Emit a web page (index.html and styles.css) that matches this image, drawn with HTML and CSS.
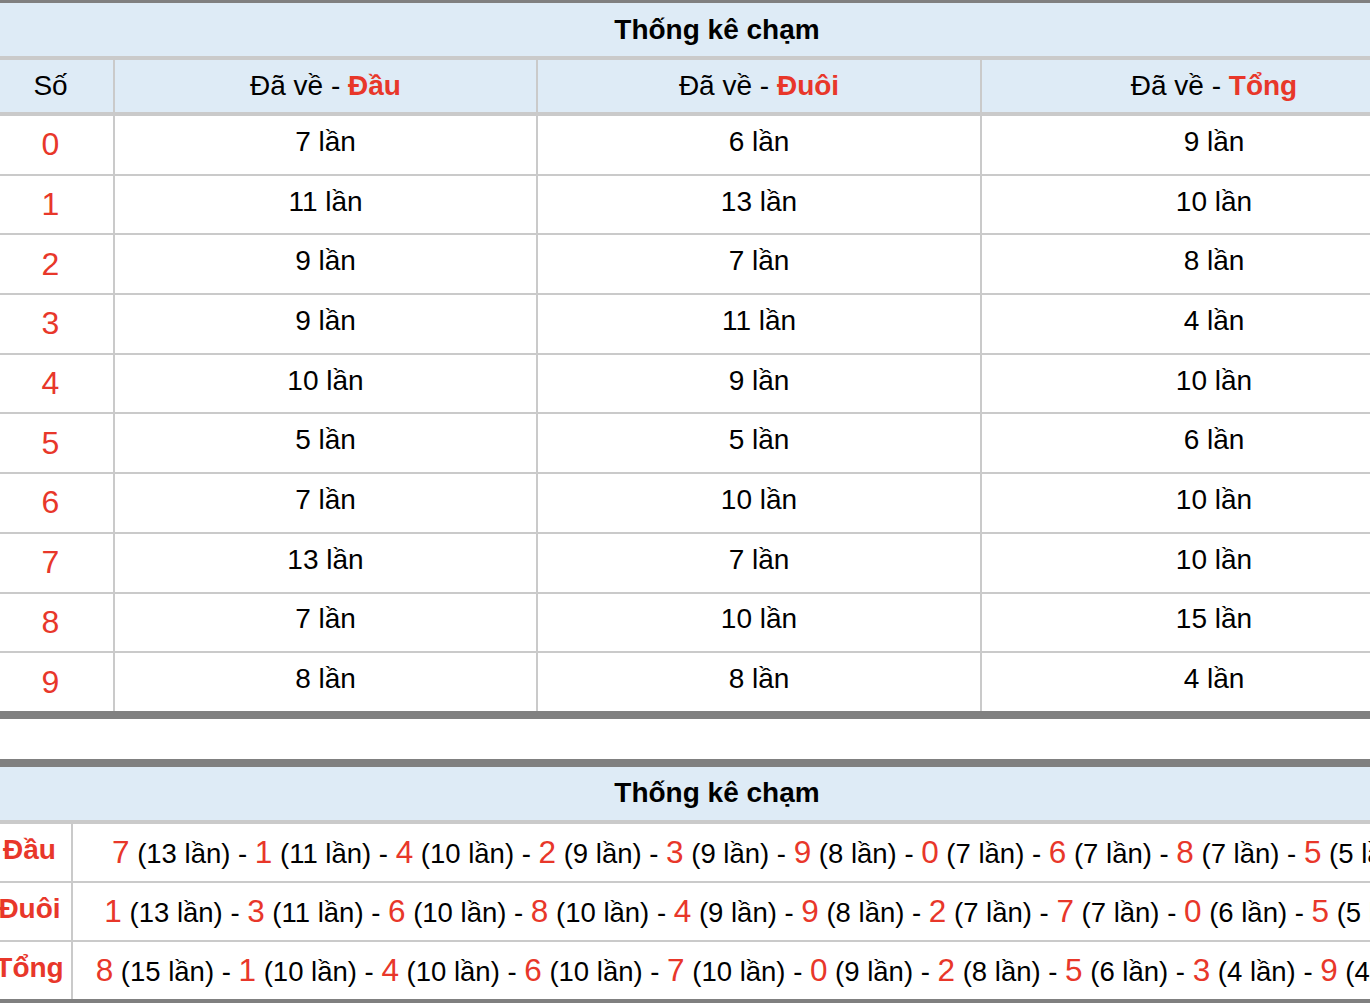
FILE: index.html
```html
<!DOCTYPE html>
<html lang="vi">
<head>
<meta charset="utf-8">
<title>Thống kê chạm</title>
<link rel="stylesheet" href="styles.css">
</head>
<body>
<div class="page">
  <section class="board board-main">
    <div class="title">Thống kê chạm</div>
    <div class="grid grid-main">
      <div class="cell head">Số</div>
      <div class="cell head"><span>Đã về - <b class="hl">Đầu</b></span></div>
      <div class="cell head"><span>Đã về - <b class="hl">Đuôi</b></span></div>
      <div class="cell head"><span>Đã về - <b class="hl">Tổng</b></span></div>

      <div class="cell num">0</div><div class="cell txt">7 lần</div><div class="cell txt">6 lần</div><div class="cell txt">9 lần</div>
      <div class="cell num">1</div><div class="cell txt">11 lần</div><div class="cell txt">13 lần</div><div class="cell txt">10 lần</div>
      <div class="cell num">2</div><div class="cell txt">9 lần</div><div class="cell txt">7 lần</div><div class="cell txt">8 lần</div>
      <div class="cell num">3</div><div class="cell txt">9 lần</div><div class="cell txt">11 lần</div><div class="cell txt">4 lần</div>
      <div class="cell num">4</div><div class="cell txt">10 lần</div><div class="cell txt">9 lần</div><div class="cell txt">10 lần</div>
      <div class="cell num">5</div><div class="cell txt">5 lần</div><div class="cell txt">5 lần</div><div class="cell txt">6 lần</div>
      <div class="cell num">6</div><div class="cell txt">7 lần</div><div class="cell txt">10 lần</div><div class="cell txt">10 lần</div>
      <div class="cell num">7</div><div class="cell txt">13 lần</div><div class="cell txt">7 lần</div><div class="cell txt">10 lần</div>
      <div class="cell num">8</div><div class="cell txt">7 lần</div><div class="cell txt">10 lần</div><div class="cell txt">15 lần</div>
      <div class="cell num last">9</div><div class="cell txt last">8 lần</div><div class="cell txt last">8 lần</div><div class="cell txt last">4 lần</div>
    </div>
  </section>

  <section class="board board-sum">
    <div class="title">Thống kê chạm</div>
    <div class="grid grid-sum">
      <div class="cell label">Đầu</div>
      <div class="cell list"><span class="line"><span class="n">7</span> (13 lần) - <span class="n">1</span> (11 lần) - <span class="n">4</span> (10 lần) - <span class="n">2</span> (9 lần) - <span class="n">3</span> (9 lần) - <span class="n">9</span> (8 lần) - <span class="n">0</span> (7 lần) - <span class="n">6</span> (7 lần) - <span class="n">8</span> (7 lần) - <span class="n">5</span> (5 lần)</span></div>
      <div class="cell label">Đuôi</div>
      <div class="cell list"><span class="line"><span class="n">1</span> (13 lần) - <span class="n">3</span> (11 lần) - <span class="n">6</span> (10 lần) - <span class="n">8</span> (10 lần) - <span class="n">4</span> (9 lần) - <span class="n">9</span> (8 lần) - <span class="n">2</span> (7 lần) - <span class="n">7</span> (7 lần) - <span class="n">0</span> (6 lần) - <span class="n">5</span> (5 lần)</span></div>
      <div class="cell label last">Tổng</div>
      <div class="cell list last"><span class="line"><span class="n">8</span> (15 lần) - <span class="n">1</span> (10 lần) - <span class="n">4</span> (10 lần) - <span class="n">6</span> (10 lần) - <span class="n">7</span> (10 lần) - <span class="n">0</span> (9 lần) - <span class="n">2</span> (8 lần) - <span class="n">5</span> (6 lần) - <span class="n">3</span> (4 lần) - <span class="n">9</span> (4 lần)</span></div>
    </div>
  </section>
</div>
</body>
</html>
```

FILE: styles.css
```css
html, body {
  margin: 0;
  padding: 0;
  overflow: hidden;
  background: #ffffff;
}

body {
  font-family: "Liberation Sans", Arial, Helvetica, sans-serif;
  color: #000000;
  font-size: 28px;
}

.page {
  width: 1458px;
  margin-left: -12px;
  margin-top: -5px;
}

.board {
  border-top: 8px solid #808080;
  border-bottom: 8px solid #808080;
}

.board-sum {
  margin-top: 40px;
}

.title {
  height: 57px;
  box-sizing: border-box;
  background: #deebf6;
  border-bottom: 4px solid #cacaca;
  display: flex;
  align-items: center;
  justify-content: center;
  font-weight: bold;
  font-size: 28px;
}

.grid {
  display: grid;
}

.grid-main {
  grid-template-columns: 127px 423px 444px 464px;
}

.grid-sum {
  grid-template-columns: 85px 1373px;
}

.cell {
  box-sizing: border-box;
  height: 59.7px;
  border-right: 2px solid #cacaca;
  border-bottom: 2px solid #cacaca;
  display: flex;
  align-items: center;
  justify-content: center;
  white-space: nowrap;
}

.cell:nth-child(4n) {
  border-right: none;
}

.grid-sum .cell {
  height: 59px;
}

.grid-sum .cell:nth-child(2n) {
  border-right: none;
}

.cell.last {
  border-bottom: none;
  height: 57.7px;
}

.grid-sum .cell.last {
  height: 57px;
}

.head {
  height: 56px;
  background: #deebf6;
  border-bottom: 4px solid #cacaca;
  font-size: 28px;
}

.hl {
  color: #e8372a;
  font-weight: bold;
}

.num {
  color: #e8372a;
  font-size: 32px;
}

.txt {
  padding-bottom: 6px;
}

.label {
  color: #e8372a;
  font-weight: bold;
  padding-bottom: 4px;
}

.list {
  overflow: visible;
}

.line {
  white-space: nowrap;
  flex: none;
  font-size: 27.5px;
}

.n {
  color: #e8372a;
  font-size: 31.5px;
}
```
